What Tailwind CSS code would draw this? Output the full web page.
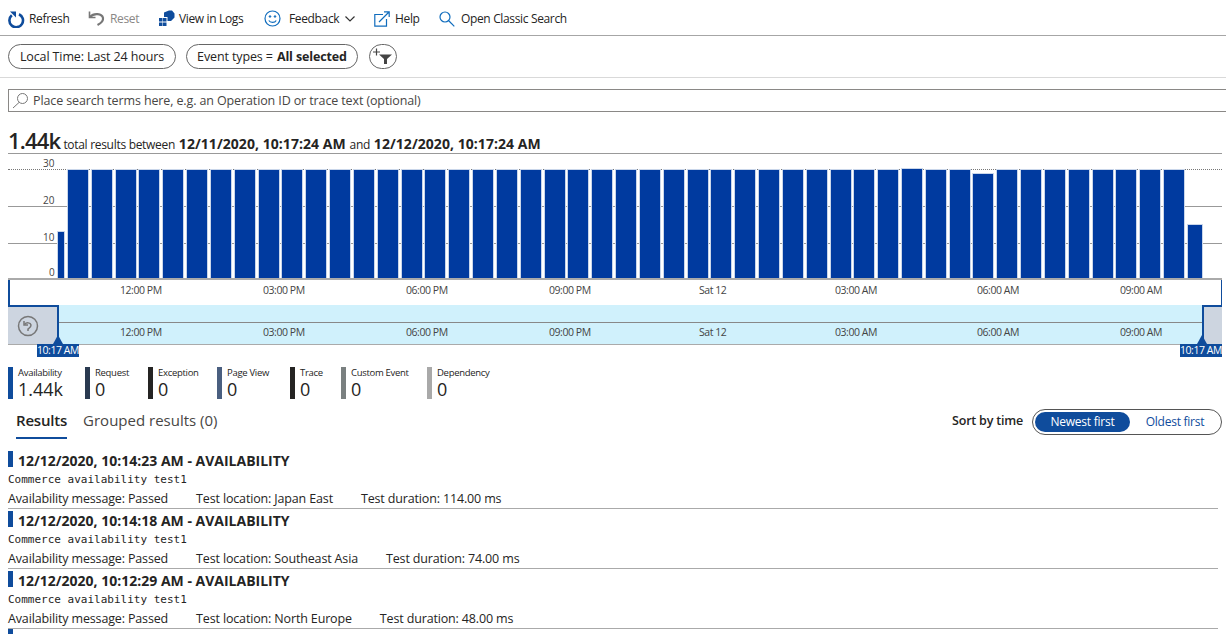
<!DOCTYPE html>
<html lang="en">

<head>
    <meta charset="UTF-8">
    <title>Search</title>
    <script src="https://cdn.jsdelivr.net/npm/@tailwindcss/browser@4"></script>
</head>

<body class="bg-white h-[634px] w-[1226px] overflow-hidden font-['Open_Sans',sans-serif] text-[#252423]">
    <!-- toolbar -->
    <div class="h-9 border-b border-[#a6a6a6] flex items-center pl-2 pt-[2px] text-[12px] tracking-[-0.35px]">
        <span class="flex items-center gap-[4px] w-[80px]">
            <svg class="w-[17px] h-[18px]" viewBox="0 0 17 18" fill="none"><path d="M3.800 5.200A6.800 6.800 0 1 0 11 4.200" stroke="#0f4c9c" stroke-width="2.600"/><path d="M2 1.500h6v6z" fill="#0f4c9c"/></svg>
            Refresh
        </span>
        <span class="flex items-center gap-[5px] w-[70px] text-[#8a8886]">
            <svg class="w-[17px] h-[17px]" viewBox="0 0 17 17" fill="none"><path d="M1.500 1.500v6h6" stroke="#777" stroke-width="1.600"/><path d="M2 7C6 2.500 14 3.500 15 8c.5 3-2.500 5.500-5.500 7" stroke="#777" stroke-width="2.200"/></svg>
            Reset
        </span>
        <span class="flex items-center gap-[4px] w-[106px]">
            <svg class="w-[17px] h-[17px]" viewBox="0 0 17 17" fill="#0f4c9c"><path d="M6 2.500 11 .5h3l2.500 3v4L13 11H9.500V7H6z"/><rect x="1" y="8" width="3.500" height="3.500"/><rect x="5" y="8" width="3.500" height="3.500"/><rect x="1" y="12.500" width="3.500" height="3.500"/><rect x="5" y="12.500" width="3.500" height="3.500"/></svg>
            View in Logs
        </span>
        <span class="flex items-center gap-[8px] w-[110px]">
            <svg class="w-[17px] h-[17px]" viewBox="0 0 17 17" fill="none" stroke="#0f6cbd"><circle cx="8.500" cy="8.500" r="7.500" stroke-width="1.200"/><circle cx="6" cy="6.500" r=".8" fill="#0f6cbd"/><circle cx="11" cy="6.500" r=".8" fill="#0f6cbd"/><path d="M4.800 10.500c1.500 2.500 6 2.500 7.400 0" stroke-width="1.200"/></svg>
            Feedback
            <svg class="w-[10px] h-[6px] ml-[-2px]" viewBox="0 0 10 6" fill="none"><path d="M.5.500 5 5 9.500.500" stroke="#333" stroke-width="1.200"/></svg>
        </span>
        <span class="flex items-center gap-[5px] w-[65px]">
            <svg class="w-[16px] h-[16px]" viewBox="0 0 16 16" fill="none" stroke="#0f6cbd" stroke-width="1.200"><path d="M9 3.500H.8v11.700h11.700V8"/><path d="M5 11 15 1M10 .8h5.200V6"/></svg>
            Help
        </span>
        <span class="flex items-center gap-[6px]">
            <svg class="w-[16px] h-[16px]" viewBox="0 0 16 16" fill="none" stroke="#0f6cbd" stroke-width="1.200"><circle cx="6" cy="6" r="5"/><path d="m9.500 9.500 5.800 5.800"/></svg>
            Open Classic Search
        </span>
    </div>

    <!-- filters -->
    <div class="h-[42px] border-b border-[#d9d9d9] flex items-center gap-[10px] pl-2 text-[12.500px] tracking-[-0.12px]">
        <span class="h-[25px] w-[168px] pt-[2px] border border-[#666] rounded-full flex items-center justify-center">Local Time: Last 24 hours</span>
        <span class="h-[25px] w-[172px] pt-[2px] border border-[#666] rounded-full flex items-center justify-center gap-1">Event types = <b>All selected</b></span>
        <span class="ml-px h-[25px] w-[28px] border border-[#666] rounded-full flex items-center justify-center">
            <svg class="w-[22px] h-[17px]" viewBox="0 0 22 17"><path d="M1 4h7M4.500 .5v7" stroke="#444" stroke-width="1.200"/><path d="M7 6.500h13l-5 4.500v5h-3v-5z" fill="#444"/></svg>
        </span>
    </div>

    <!-- search -->
    <div class="mt-[11px] ml-2 h-[23px] border border-[#8a8886] border-r-0 flex items-center pl-[3px] gap-[4px] text-[12.500px] tracking-[-0.12px] text-[#484644]">
        <svg class="w-[17px] h-[17px]" viewBox="0 0 17 17" fill="none" stroke="#777"><circle cx="10.500" cy="6.500" r="5"/><path d="M7 10.500 1 16"/></svg>
        <span class="pt-[2px]">Place search terms here, e.g. an Operation ID or trace text (optional)</span>
    </div>

    <!-- summary -->
    <div class="mt-[17px] ml-2 mr-1 h-[25px] border-b border-[#999] flex items-baseline gap-[3px] text-[12px] tracking-[-0.3px] leading-[22px]">
        <span class="text-[22px] font-semibold tracking-[-0.8px]">1.44k</span>
        <span>total results between <b class="text-[14px] tracking-[0.05px] mx-[1px]">12/11/2020, 10:17:24 AM</b> and <b class="text-[14px] tracking-[0.05px] mx-[1px]">12/12/2020, 10:17:24 AM</b></span>
    </div>

    <!-- chart -->
    <div class="relative ml-2 mr-1 mt-[15px] h-[111px]">
        <div class="absolute inset-x-0 top-0 border-t border-dotted border-[#777]"></div>
        <div class="absolute inset-x-0 top-[37px] border-t border-[#999]"></div>
        <div class="absolute inset-x-0 top-[74px] border-t border-[#999]"></div>
        <div class="absolute left-[35px] top-[-13px] text-[10px] text-[#444]">30</div>
        <div class="absolute left-[35px] top-[24px] text-[10px] text-[#444]">20</div>
        <div class="absolute left-[35px] top-[61px] text-[10px] text-[#444]">10</div>
        <div class="absolute left-[41px] top-[96px] text-[10px] text-[#444]">0</div>
        <div id="bars" class="absolute left-[50px] top-0 h-[110px] flex items-end"></div>
        <div class="absolute inset-x-0 bottom-0 border-b-2 border-[#aaa]"></div>
    </div>

    <!-- time axis -->
    <div class="relative ml-2 mr-1 h-[25px] text-[10.500px] tracking-[-0.45px] text-[#444]">
        <div class="absolute inset-y-0 left-0 w-[2px] bg-[#0f4c9c]"></div>
        <div class="absolute inset-y-0 right-0 w-[1px] bg-[#0f4c9c]"></div>
        <div class="absolute inset-0 top-[3px]">
            <span class="absolute left-[112px]">12:00 PM</span>
            <span class="absolute left-[255px]">03:00 PM</span>
            <span class="absolute left-[398px]">06:00 PM</span>
            <span class="absolute left-[541px]">09:00 PM</span>
            <span class="absolute left-[691px]">Sat 12</span>
            <span class="absolute left-[827px]">03:00 AM</span>
            <span class="absolute left-[969px]">06:00 AM</span>
            <span class="absolute left-[1112px]">09:00 AM</span>
        </div>
    </div>

    <!-- brush -->
    <div class="relative ml-2 mr-1 h-[40px] bg-[#d0f1fc] border-b border-[#aaa] text-[10.500px] tracking-[-0.45px] text-[#444]">
        <div class="absolute inset-x-0 top-[17px] border-t border-[#888]"></div>
        <div class="absolute inset-0 top-[20px]">
            <span class="absolute left-[112px]">12:00 PM</span>
            <span class="absolute left-[255px]">03:00 PM</span>
            <span class="absolute left-[398px]">06:00 PM</span>
            <span class="absolute left-[541px]">09:00 PM</span>
            <span class="absolute left-[691px]">Sat 12</span>
            <span class="absolute left-[827px]">03:00 AM</span>
            <span class="absolute left-[969px]">06:00 AM</span>
            <span class="absolute left-[1112px]">09:00 AM</span>
        </div>
        <div class="absolute left-0 top-0 bottom-0 w-[51px] bg-[#cdd5e0] border-t-2 border-r-2 border-[#0f4c9c] flex items-center justify-center pr-[10px]">
            <svg class="w-[22px] h-[22px]" viewBox="0 0 22 22" fill="none" stroke="#777" stroke-width="1.500"><circle cx="11" cy="11" r="9.500"/><path d="M7 6v4h4"/><path d="M7.500 9.500c2-2.500 6-2 6.500.5.300 2-1.500 3-3 4v2"/></svg>
        </div>
        <div class="absolute right-0 top-0 bottom-0 w-[20px] bg-[#cdd5e0] border-t-2 border-l-2 border-[#0f4c9c]"></div>
        <div class="absolute left-[45px] bottom-0 border-x-[5px] border-x-transparent border-b-[9px] border-b-[#0f4c9c]"></div>
        <div class="absolute right-[15px] bottom-0 border-x-[5px] border-x-transparent border-b-[9px] border-b-[#0f4c9c]"></div>
        <div class="absolute left-[29px] top-[39px] w-[42px] h-[13px] bg-[#0f4c9c] text-white text-[10.500px] leading-[13px] text-center whitespace-nowrap">10:17 AM</div>
        <div class="absolute right-0 top-[39px] w-[42px] h-[13px] bg-[#0f4c9c] text-white text-[10.500px] leading-[13px] text-center whitespace-nowrap">10:17 AM</div>
    </div>

    <!-- event type counts -->
    <div class="ml-2 mt-[22px] flex h-[32px] text-[9.500px] tracking-[-0.3px]">
        <div class="w-[77px] border-l-[5px] border-[#0f4c9c] pl-[5px]"><div class="leading-[12px]">Availability</div><div class="text-[18px] leading-[20px] tracking-normal">1.44k</div></div>
        <div class="w-[63px] border-l-[5px] border-[#2a3a50] pl-[5px]"><div class="leading-[12px]">Request</div><div class="text-[18px] leading-[20px]">0</div></div>
        <div class="w-[69px] border-l-[5px] border-[#252423] pl-[5px]"><div class="leading-[12px]">Exception</div><div class="text-[18px] leading-[20px]">0</div></div>
        <div class="w-[73px] border-l-[5px] border-[#4a5f80] pl-[5px]"><div class="leading-[12px]">Page View</div><div class="text-[18px] leading-[20px]">0</div></div>
        <div class="w-[51px] border-l-[5px] border-[#252423] pl-[5px]"><div class="leading-[12px]">Trace</div><div class="text-[18px] leading-[20px]">0</div></div>
        <div class="w-[86px] border-l-[5px] border-[#7a8080] pl-[5px]"><div class="leading-[12px]">Custom Event</div><div class="text-[18px] leading-[20px]">0</div></div>
        <div class="border-l-[5px] border-[#a9a9a9] pl-[5px]"><div class="leading-[12px]">Dependency</div><div class="text-[18px] leading-[20px]">0</div></div>
    </div>

    <!-- tabs -->
    <div class="ml-4 mr-1 mt-[5px] h-[35px] flex items-center text-[15px]">
        <span class="h-full flex items-center font-semibold border-b-2 border-[#0f4c9c] tracking-[-0.2px]">Results</span>
        <span class="ml-4 mb-[2px] text-[#484644]">Grouped results (0)</span>
        <span class="ml-auto font-semibold text-[12.500px] tracking-[-0.2px]">Sort by time</span>
        <span class="ml-[9px] w-[190px] h-[26px] border border-[#555] rounded-full flex items-center text-[12px] tracking-[-0.25px] text-[#0f4c9c] p-[1px]">
            <span class="w-[95px] h-[20px] ml-[1px] rounded-full bg-[#0f4c9c] text-white flex items-center justify-center">Newest first</span>
            <span class="flex-1 text-center">Oldest first</span>
        </span>
    </div>

    <!-- results -->
    <div id="results" class="mt-[10px]"></div>

    <script>
        // per bar heights, only a couple differ from the flat 30
        const bars = document.getElementById("bars");
        for (let i = 0; i < 49; i++) {
            let height = 109;
            if (i === 0) height = 47;
            if (i === 48) height = 54;
            if (i === 36) height = 110;
            if (i === 39) height = 105;
            const bar = document.createElement("div");
            bar.className = "shrink-0 bg-[#003a9f] outline outline-1 outline-[#c9d6ea]";
            bar.style.height = height + "px";
            bar.style.width = (i === 0 ? 6 : i === 48 ? 14 : 20) + "px";
            bar.style.marginLeft = (i === 0 ? 0 : i === 1 ? 4 : 3.83) + "px";
            bars.appendChild(bar);
        }

        const results = [
            ["12/12/2020, 10:14:23 AM - AVAILABILITY", "Japan East", "114.00 ms"],
            ["12/12/2020, 10:14:18 AM - AVAILABILITY", "Southeast Asia", "74.00 ms"],
            ["12/12/2020, 10:12:29 AM - AVAILABILITY", "North Europe", "48.00 ms"],
        ];
        document.getElementById("results").innerHTML = results.map(r => `
            <div class="mx-2 h-[60px] border-b border-[#aaa]">
                <div class="flex items-center h-[18px] pt-[2px]">
                    <span class="w-[5px] h-[16px] bg-[#0f4c9c] mr-[5px]"></span>
                    <b class="text-[14px] mt-[2px]">${r[0]}</b>
                </div>
                <div class="mt-[4px] h-[17px] text-[11px] leading-[17px] font-['DejaVu_Sans_Mono',monospace]">Commerce availability test1</div>
                <div class="mt-[2px] flex gap-7 text-[12.500px] tracking-[-0.15px] leading-[18px]">
                    <span>Availability message: Passed</span>
                    <span>Test location: ${r[1]}</span>
                    <span>Test duration: ${r[2]}</span>
                </div>
            </div>`).join("") + `<div class="ml-2 w-[5px] h-[6px] bg-[#0f4c9c]"></div>`;
    </script>
</body>

</html>
